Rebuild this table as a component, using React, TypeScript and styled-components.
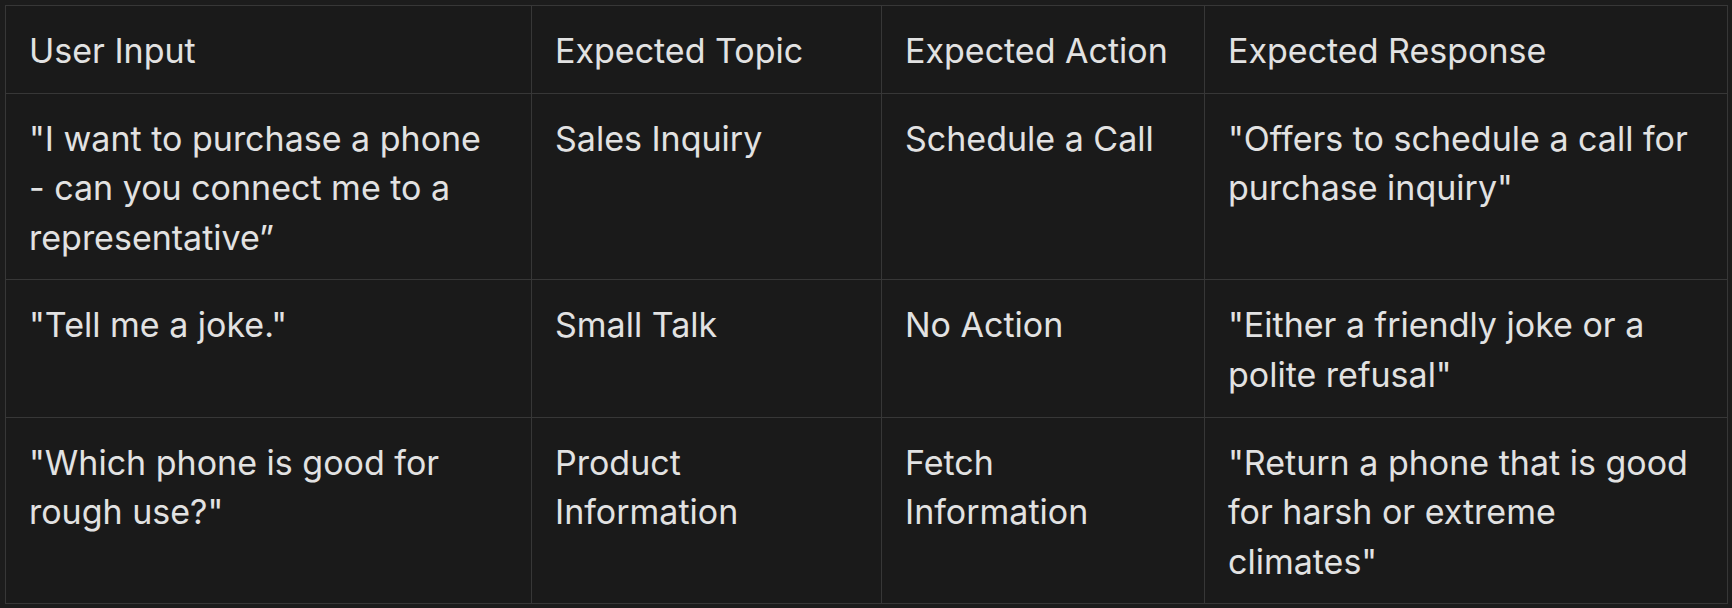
import styled, { createGlobalStyle } from "styled-components";

const GlobalStyle = createGlobalStyle`
  html, body {
    margin: 0;
    padding: 0;
    background: #1c1c1c;
  }
  body {
    font-family: Inter, "Noto Sans", "Liberation Sans", sans-serif;
  }
`;

const Page = styled.div`
  padding: 5px;
`;

const Table = styled.table`
  width: 1722px;
  table-layout: fixed;
  border-collapse: collapse;
  background: #1a1a1a;
  border: 1px solid #373737;
  color: #e2e2e2;
  font-size: 34px;
  line-height: 49.6px;
`;

const Cell = styled.td`
  border: 1px solid #373737;
  padding: 20px 22px 17px 23px;
  vertical-align: top;
  text-align: left;
  font-weight: 400;
`;

const HeadCell = styled(Cell).attrs({ as: "th" })``;

const columns = [526, 350, 323, 523];

const headers = ["User Input", "Expected Topic", "Expected Action", "Expected Response"];

// word joiner keeps the dash on the same line as "can"
const rows = [
  [
    "\"I want to purchase a phone -\u2060\u00A0can you connect me to a representative\u201D",
    "Sales Inquiry",
    "Schedule a Call",
    "\"Offers to schedule a call for purchase inquiry\"",
  ],
  ["\"Tell me a joke.\"", "Small Talk", "No Action", "\"Either a friendly joke or a polite refusal\""],
  [
    "\"Which phone is good for rough use?\"",
    "Product Information",
    "Fetch Information",
    "\"Return a phone that is good for harsh or extreme climates\"",
  ],
];

export default function App() {
  return (
    <Page>
      <GlobalStyle />
      <Table>
        <colgroup>
          {columns.map((w, i) => (
            <col key={i} style={{ width: w }} />
          ))}
        </colgroup>
        <thead>
          <tr>
            {headers.map((h) => (
              <HeadCell key={h}>{h}</HeadCell>
            ))}
          </tr>
        </thead>
        <tbody>
          {rows.map((r, i) => (
            <tr key={i}>
              {r.map((c, j) => (
                <Cell key={j}>{c}</Cell>
              ))}
            </tr>
          ))}
        </tbody>
      </Table>
    </Page>
  );
}
